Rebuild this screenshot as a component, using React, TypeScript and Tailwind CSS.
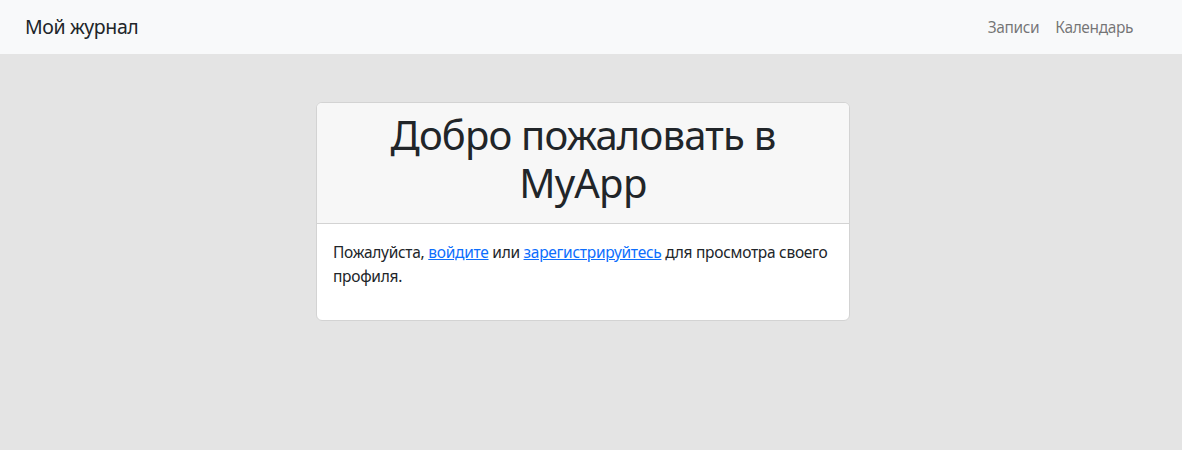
export default function App() {
  return (
    <div className="min-h-[450px] bg-[#e4e4e4] font-['Noto_Sans',sans-serif] text-[#212529]">
      <nav className="flex h-[54px] items-center justify-between bg-[#f8f9fa] pl-[25px] pr-[41px]">
        <a href="#" className="text-[19.5px] leading-[30px] tracking-[-0.02em] text-[#212529]">
          Мой журнал
        </a>
        <div className="flex items-center">
          <a href="#" className="px-2 py-2 text-[15.5px] leading-6 tracking-[-0.025em] text-[rgba(0,0,0,0.55)]">
            Записи
          </a>
          <a href="#" className="px-2 py-2 text-[15.5px] leading-6 tracking-[-0.025em] text-[rgba(0,0,0,0.55)]">
            Календарь
          </a>
        </div>
      </nav>

      <div className="pt-12">
        <div className="ml-[316px] w-[534px] overflow-hidden rounded-md border border-[#d3d3d3] bg-white">
          <div className="border-b border-[#d3d3d3] bg-[#f7f7f7] px-4 pt-2 pb-2">
            <h1 className="mb-2 text-center text-[40px] leading-[48px] font-normal tracking-[-0.02em]">
              Добро пожаловать в MyApp
            </h1>
          </div>
          <div className="p-4">
            <p className="mb-4 text-[15.5px] leading-6 tracking-[-0.018em]">
              Пожалуйста,{" "}
              <a href="#" className="text-[#0d6efd] underline">
                войдите
              </a>{" "}
              или{" "}
              <a href="#" className="text-[#0d6efd] underline">
                зарегистрируйтесь
              </a>{" "}
              для просмотра своего профиля.
            </p>
          </div>
        </div>
      </div>
    </div>
  );
}
